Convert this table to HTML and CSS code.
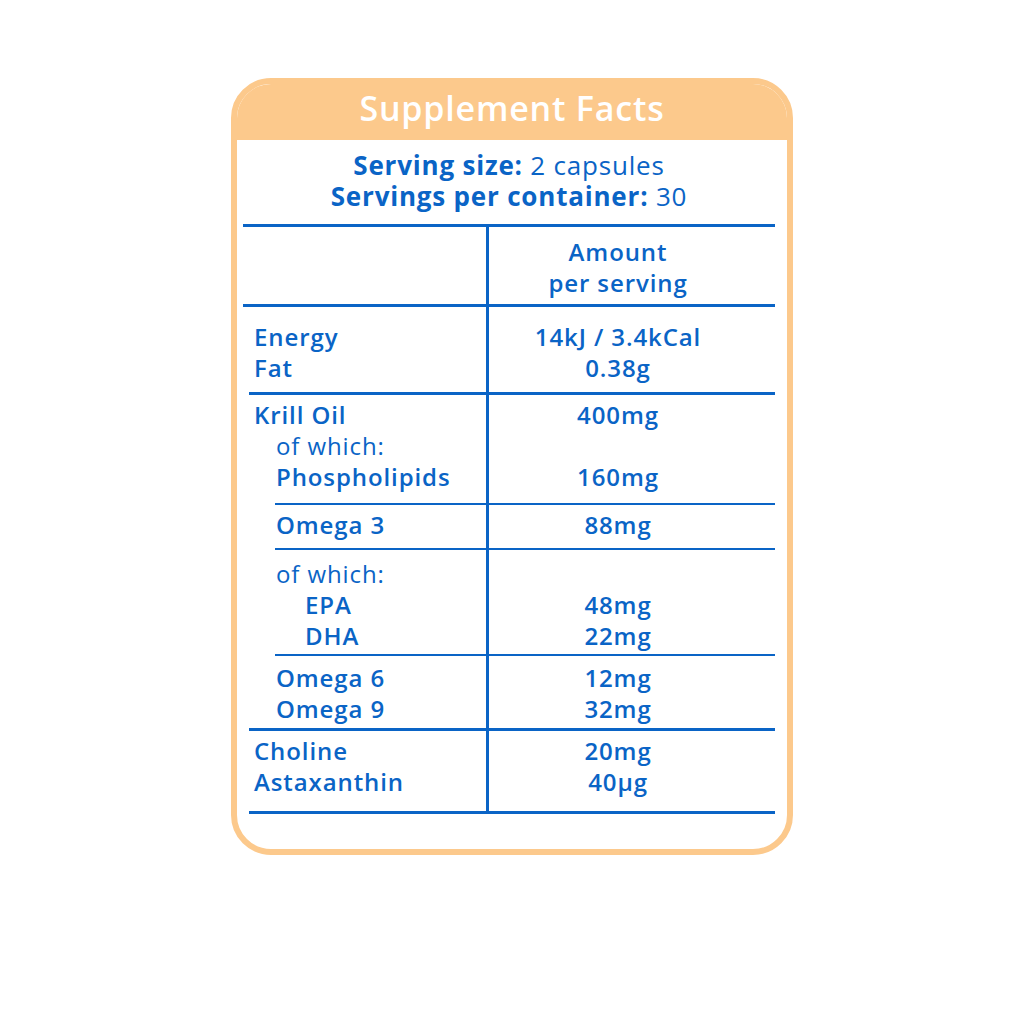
FILE: index.html
```html
<!DOCTYPE html>
<html lang="en">
<head>
<meta charset="utf-8">
<title>Supplement Facts</title>
<link rel="stylesheet" href="styles.css">
</head>
<body>
<div class="page">
  <div class="card">
    <div class="card-head">Supplement Facts</div>
    <div class="card-body">
      <div class="serving">
        <div><b>Serving size:</b> 2 capsules</div>
        <div><b>Servings per container:</b> 30</div>
      </div>
      <div class="facts">
        <div class="rule thick"></div>
        <div class="row r-head">
          <div class="cell name"></div>
          <div class="cell val">Amount<br>per serving</div>
        </div>
        <div class="rule thick"></div>
        <div class="row r-energy">
          <div class="cell name"><div>Energy</div><div>Fat</div></div>
          <div class="cell val"><div>14kJ / 3.4kCal</div><div>0.38g</div></div>
        </div>
        <div class="rule thick inset"></div>
        <div class="row r-krill">
          <div class="cell name"><div>Krill Oil</div><div class="ind light">of which:</div><div class="ind">Phospholipids</div></div>
          <div class="cell val"><div>400mg</div><div>&nbsp;</div><div>160mg</div></div>
        </div>
        <div class="rule thin"></div>
        <div class="row r-o3">
          <div class="cell name"><div class="ind">Omega 3</div></div>
          <div class="cell val"><div>88mg</div></div>
        </div>
        <div class="rule thin"></div>
        <div class="row r-which">
          <div class="cell name"><div class="ind light">of which:</div><div class="ind2">EPA</div><div class="ind2">DHA</div></div>
          <div class="cell val"><div>&nbsp;</div><div>48mg</div><div>22mg</div></div>
        </div>
        <div class="rule thin"></div>
        <div class="row r-o6">
          <div class="cell name"><div class="ind">Omega 6</div><div class="ind">Omega 9</div></div>
          <div class="cell val"><div>12mg</div><div>32mg</div></div>
        </div>
        <div class="rule thick inset"></div>
        <div class="row r-chol">
          <div class="cell name"><div>Choline</div><div>Astaxanthin</div></div>
          <div class="cell val"><div>20mg</div><div>40µg</div></div>
        </div>
        <div class="rule thick inset"></div>
      </div>
    </div>
  </div>
</div>
</body>
</html>
```
FILE: styles.css
```css
* { box-sizing: border-box; }
html, body { margin: 0; padding: 0; background: #ffffff; }
body {
  font-family: "Open Sans", "Noto Sans", sans-serif;
  color: #0a64c6;
}
.page {
  width: 1024px;
  height: 1024px;
  padding-top: 78px;
  padding-left: 231px;
}
.card {
  width: 562px;
  height: 777px;
  border: 6px solid #fcc98c;
  border-radius: 40px;
  overflow: hidden;
  background: #ffffff;
  display: flex;
  flex-direction: column;
}
.card-head {
  background: #fcc98c;
  height: 56px;
  color: #ffffff;
  font-weight: 600;
  font-size: 34px;
  line-height: 48px;
  text-align: center;
  letter-spacing: 0.8px;
}
.card-body {
  padding: 10px 12px 0 6px;
}
.serving {
  text-align: center;
  font-size: 26px;
  line-height: 31px;
  margin-bottom: 12px;
  letter-spacing: 0.8px;
}
.serving b { font-weight: 700; }
.facts {
  font-size: 24px;
  line-height: 31px;
  font-weight: 600;
  letter-spacing: 0.9px;
}
.rule { background: #0a64c6; height: 3px; }
.rule.inset { margin-left: 6px; }
.rule.thin { height: 2px; margin-left: 32px; }
.row { display: flex; }
.cell.name {
  width: 246px;
  border-right: 3px solid #0a64c6;
  padding-left: 11px;
}
.cell.val {
  flex: 1;
  text-align: center;
  padding-right: 28px;
}
.ind { padding-left: 22px; }
.ind2 { padding-left: 51px; }
.light { font-weight: 400; }
.r-head { height: 77px; }
.r-head .val { padding-top: 9px; }
.r-energy { height: 85px; }
.r-energy .cell { padding-top: 14px; }
.r-krill { height: 108px; }
.r-krill .cell { padding-top: 4px; }
.r-o3 { height: 43px; }
.r-o3 .cell { padding-top: 4px; }
.r-which { height: 104px; }
.r-which .cell { padding-top: 8px; }
.r-o6 { height: 72px; }
.r-o6 .cell { padding-top: 6px; }
.r-chol { height: 80px; }
.r-chol .cell { padding-top: 4px; }
```
